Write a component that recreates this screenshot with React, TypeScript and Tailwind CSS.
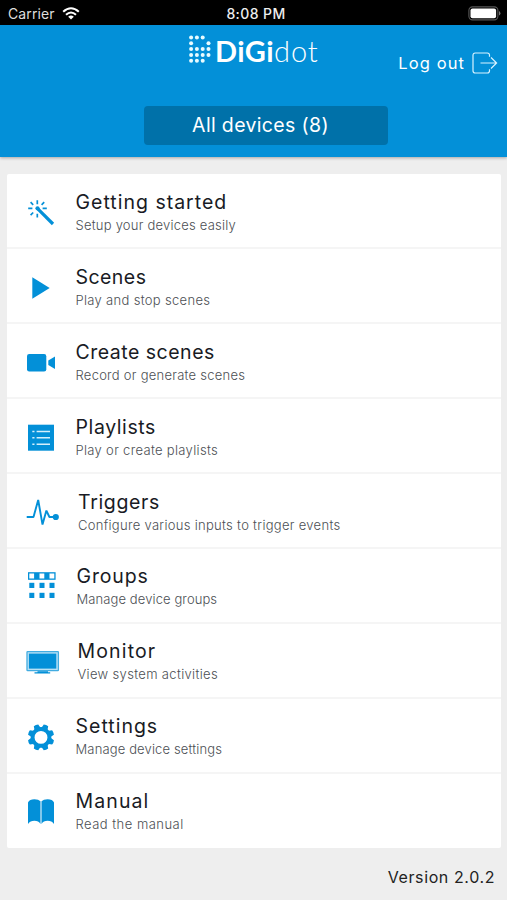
import type { ReactNode } from 'react'

type MenuItem = {
  title: string
  subtitle: string
  icon: ReactNode
  indent: string
  titleTracking: string
  subtitleTracking: string
}

const BLUE = '#0390d8'

const LOGO_ROWS = [
  [0, 1, 2],
  [0, 3],
  [0, 1, 2, 3],
  [0, 1, 2, 3],
  [0, 1, 2],
]

const WandIcon = () => (
  <g stroke={BLUE} strokeWidth="1.7" fill="none">
    <path d="M17.3 13.2v4M8.2 21.3h4.2M22.6 21.3h4.2M17.3 26.8v3.8M10.6 15.2l2.6 2.6M24.2 15.2l-2.6 2.6M10.6 28.1l2.6-2.6" />
    <path d="M17.6 21.6L33 37" strokeWidth="3.2" />
    <circle cx="17.5" cy="21.3" r="2.1" fill={BLUE} stroke="none" />
  </g>
)

const PlayIcon = () => <path d="M12.3 15.3L29.7 26L12.3 36.7z" fill={BLUE} />

const CameraIcon = () => (
  <g fill={BLUE}>
    <rect x="7" y="17" width="19.3" height="17.4" rx="2.2" />
    <path d="M28.3 23.6L35 19.5v12.6l-6.7-4.1z" />
  </g>
)

const PlaylistIcon = () => (
  <g>
    <rect x="8" y="12.7" width="26" height="26" fill={BLUE} />
    <path d="M12.3 19.4h2.2M16.6 19.4H30M12.3 25.8h2.2M16.6 25.8H30M12.3 32.2h2.2M16.6 32.2H30" stroke="#d5effb" strokeWidth="1.5" />
  </g>
)

const TriggerIcon = () => (
  <g>
    <path d="M6.7 30h6.8L18.2 13l4.3 24.5L26.4 23.6l3 6.4H36" fill="none" stroke={BLUE} strokeWidth="1.9" strokeLinejoin="bevel" />
    <circle cx="35.8" cy="30" r="3.1" fill={BLUE} />
  </g>
)

const GroupsIcon = () => (
  <g fill={BLUE}>
    <rect x="8" y="10.2" width="27.6" height="7.6" />
    {[9.3, 19.5, 29.5].map((x) => (
      <g key={x}>
        <rect x={x} y="11.5" width="4.8" height="5" fill="#fff" />
        <rect x={x} y="20.8" width="5" height="5.2" />
        <rect x={x} y="30.8" width="5" height="5.2" />
      </g>
    ))}
  </g>
)

const MonitorIcon = () => (
  <g>
    <rect x="7" y="14.6" width="31.4" height="19" rx="0.6" fill="#b9e1f5" stroke="#42ace1" strokeWidth="1.3" />
    <rect x="8.9" y="16.6" width="27.4" height="15" fill={BLUE} />
    <path d="M17.5 34.2h10.5v1h2.2v1.2H14.5v-1.2h3z" fill={BLUE} />
  </g>
)

const GearIcon = () => (
  <g transform="translate(21 25.4)">
    <circle r="8.4" fill="none" stroke={BLUE} strokeWidth="3.9" />
    {[0, 1, 2, 3, 4, 5, 6, 7].map((n) => (
      <path key={n} d="M-3.8 -8.6Q-2.7 -10.5 -2.4 -13Q0 -13.8 2.4 -13Q2.7 -10.5 3.8 -8.6z" fill={BLUE} transform={`rotate(${22.5 + n * 45})`} />
    ))}
  </g>
)

const BookIcon = () => (
  <g fill={BLUE}>
    <path d="M8 37V15.6Q9.6 12.3 14.4 12.3Q18.6 12.3 20.5 14.2V37Q18.6 33.8 14.4 33.8Q10.2 33.8 8 37z" />
    <path d="M34 37V15.6Q32.4 12.3 27.6 12.3Q23.4 12.3 21.5 14.2V37Q23.4 33.8 27.6 33.8Q31.8 33.8 34 37z" />
  </g>
)

const MENU: MenuItem[] = [
  { title: 'Getting started', subtitle: 'Setup your devices easily', icon: <WandIcon />, indent: 'pt-4 pl-[7.5px]', titleTracking: 'tracking-[1px]', subtitleTracking: 'tracking-[0.23px]' },
  { title: 'Scenes', subtitle: 'Play and stop scenes', icon: <PlayIcon />, indent: 'pt-4 pl-[7.5px]', titleTracking: 'tracking-[0.45px]', subtitleTracking: 'tracking-[0.32px]' },
  { title: 'Create scenes', subtitle: 'Record or generate scenes', icon: <CameraIcon />, indent: 'pt-4 pl-[7.5px]', titleTracking: 'tracking-[0.5px]', subtitleTracking: 'tracking-[0.26px]' },
  { title: 'Playlists', subtitle: 'Play or create playlists', icon: <PlaylistIcon />, indent: 'pt-4 pl-[7.5px]', titleTracking: 'tracking-[0.6px]', subtitleTracking: 'tracking-[0.32px]' },
  { title: 'Triggers', subtitle: 'Configure various inputs to trigger events', icon: <TriggerIcon />, indent: 'pt-4 pl-[10px]', titleTracking: 'tracking-[0.65px]', subtitleTracking: 'tracking-[0.3px]' },
  { title: 'Groups', subtitle: 'Manage device groups', icon: <GroupsIcon />, indent: 'pt-[15px] pl-[8.5px]', titleTracking: 'tracking-[0.85px]', subtitleTracking: 'tracking-[0.1px]' },
  { title: 'Monitor', subtitle: 'View system activities', icon: <MonitorIcon />, indent: 'pt-[15px] pl-[9.5px]', titleTracking: 'tracking-[1.15px]', subtitleTracking: 'tracking-[0.34px]' },
  { title: 'Settings', subtitle: 'Manage device settings', icon: <GearIcon />, indent: 'pt-[15px] pl-[7.5px]', titleTracking: 'tracking-[1px]', subtitleTracking: 'tracking-[0.14px]' },
  { title: 'Manual', subtitle: 'Read the manual', icon: <BookIcon />, indent: 'pt-[15px] pl-[7.5px]', titleTracking: 'tracking-[1.1px]', subtitleTracking: 'tracking-[0.48px]' },
]

function StatusBar() {
  return (
    <div className="grid h-[25px] grid-cols-3 items-center bg-black pl-2 pr-[6px] pt-[2px] text-[14px] leading-5 text-[#dedede]">
      <div className="flex items-center gap-[7px]">
        <span className="tracking-[0.1px]">Carrier</span>
        <svg width="18" height="13" viewBox="0 0 18 13" fill="none" stroke="#fff" strokeWidth="2.1">
          <path d="M1.2 4.7Q9-2.2 16.8 4.7M4 7.7Q9 3.3 14 7.7" />
          <path d="M9 12.4L6.2 9.7Q9 7.4 11.8 9.7z" fill="#fff" stroke="none" />
        </svg>
      </div>
      <span className="whitespace-nowrap pl-[3px] text-center font-medium tracking-[0.4px] text-[#eeeeee]">8:08 PM</span>
      <svg className="ml-auto" width="33" height="15" viewBox="0 0 33 15">
        <rect x="0.9" y="0.9" width="29" height="13" rx="3.6" fill="none" stroke="#575757" strokeWidth="1.1" />
        <rect x="2.5" y="2.6" width="25.6" height="9.6" rx="2" fill="#fff" />
        <path d="M31 5v4.6q1.4-.7 1.4-2.3T31 5z" fill="#777" />
      </svg>
    </div>
  )
}

function Logo() {
  return (
    <div className="flex items-start pl-[189px] pt-[10px]">
      <svg className="h-7 w-[22px]" viewBox="0 0 22 28" fill="#e8fbff">
        {LOGO_ROWS.map((cols, row) =>
          cols.map((col) => <circle key={`${row}-${col}`} cx={2.1 + col * 5.8} cy={2.4 + row * 5.85} r="2" />),
        )}
      </svg>
      <span className="ml-[4px] whitespace-nowrap font-['Lato'] text-[29px] leading-[32px] text-white">
        <span className="font-bold tracking-[0.4px]">DiGi</span>
        <span className="font-light tracking-[1px]">dot</span>
      </span>
    </div>
  )
}

export default function App() {
  return (
    <div className="flex h-[900px] w-[507px] flex-col overflow-hidden bg-[#eeeeee] font-['Inter',sans-serif]">
      <StatusBar />

      <header className="z-10 h-[132px] shrink-0 bg-[#0390d8] shadow-[0_1px_3px_rgba(0,0,0,0.3)]">
        <div className="flex h-[81px] items-start justify-between">
          <Logo />
          <button className="flex items-center pr-[9px] pt-[26px] text-white">
            <span className="whitespace-nowrap text-[16.5px] font-normal leading-6 tracking-[1.1px]">Log out</span>
            <svg className="ml-[7px]" width="26" height="22" viewBox="0 0 26 22" fill="none" stroke="#d9f3ff" strokeWidth="1.2">
              <path d="M17.5 4.8V3.2Q17.5 1 15.3 1H3.2Q1 1 1 3.2v15.6Q1 21 3.2 21h12.1q2.2 0 2.2-2.2v-1.6M8.5 11h16M19 5.5l5.6 5.5L19 16.5" />
            </svg>
          </button>
        </div>
        <button className="ml-[144px] block h-[39px] w-[244px] rounded-[4px] bg-[#0071a9] pb-[1px] pr-[11px] text-center text-[19.5px] leading-[38px] tracking-[0.35px] text-white">
          All devices (8)
        </button>
      </header>

      {/* main menu */}
      <main className="ml-[7px] mr-[6px] mt-[17px] shrink-0 rounded-[2px] bg-white">
        {MENU.map((item) => (
          <div key={item.title} className="flex h-[75px] border-b-2 border-[#f5f5f5] pl-[13px] last:h-[74px] last:border-b-0">
            <svg className="mt-[13px] shrink-0" width="48" height="48" viewBox="0 0 48 48">
              {item.icon}
            </svg>
            <div className={`${item.indent} whitespace-nowrap`}>
              <div className={`text-[19.5px] leading-6 text-[#191b24] ${item.titleTracking}`}>{item.title}</div>
              <div className={`text-[13px] font-light leading-[22px] text-[#4c4f54] ${item.subtitleTracking}`}>{item.subtitle}</div>
            </div>
          </div>
        ))}
      </main>

      <footer className="flex flex-1 justify-end pr-3 pt-[17px]">
        <span className="text-[16px] leading-6 tracking-[0.6px] text-[#222222]">Version 2.0.2</span>
      </footer>
    </div>
  )
}
